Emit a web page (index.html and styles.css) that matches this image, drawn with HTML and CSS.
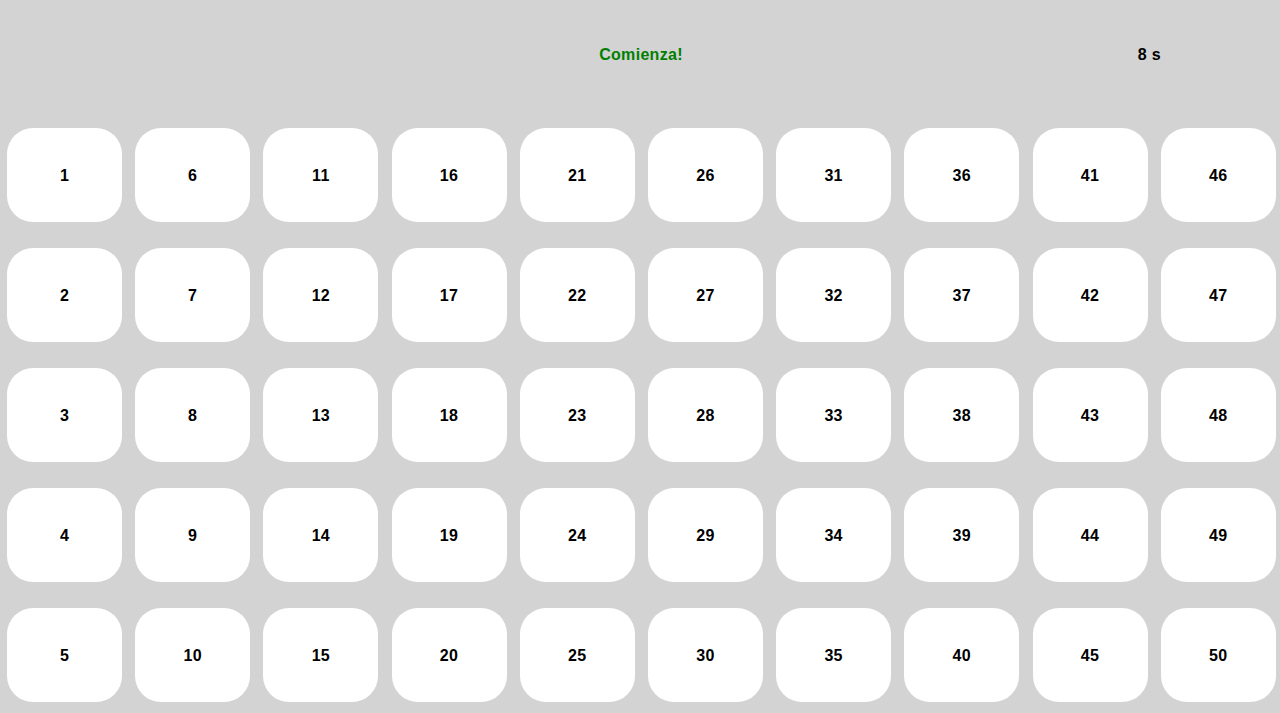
FILE: index.html
```html
<!DOCTYPE html>
<html>
<head>
<meta charset="utf-8">
<link rel="stylesheet" href="styles.css">
</head>
<body>
<header class="top">
  <div class="side"></div>
  <div class="status">Comienza!</div>
  <div class="side timer">8 s</div>
</header>
<main class="board">
  <div class="card">1</div><div class="card">6</div><div class="card">11</div><div class="card">16</div><div class="card">21</div><div class="card">26</div><div class="card">31</div><div class="card">36</div><div class="card">41</div><div class="card">46</div>
  <div class="card">2</div><div class="card">7</div><div class="card">12</div><div class="card">17</div><div class="card">22</div><div class="card">27</div><div class="card">32</div><div class="card">37</div><div class="card">42</div><div class="card">47</div>
  <div class="card">3</div><div class="card">8</div><div class="card">13</div><div class="card">18</div><div class="card">23</div><div class="card">28</div><div class="card">33</div><div class="card">38</div><div class="card">43</div><div class="card">48</div>
  <div class="card">4</div><div class="card">9</div><div class="card">14</div><div class="card">19</div><div class="card">24</div><div class="card">29</div><div class="card">34</div><div class="card">39</div><div class="card">44</div><div class="card">49</div>
  <div class="card">5</div><div class="card">10</div><div class="card">15</div><div class="card">20</div><div class="card">25</div><div class="card">30</div><div class="card">35</div><div class="card">40</div><div class="card">45</div><div class="card">50</div>
</main>
</body>
</html>
```
FILE: styles.css
```css
html, body {
  margin: 0;
  padding: 0;
  background: #d3d3d3;
  font-family: "Liberation Sans", Arial, sans-serif;
  font-weight: bold;
  font-size: 16px;
  letter-spacing: 0.3px;
  color: #000;
  overflow: hidden;
}
.top {
  box-sizing: border-box;
  height: 108px;
  padding-top: 2px;
  display: grid;
  grid-template-columns: 1fr auto 1fr;
  align-items: center;
}
.status {
  color: #008000;
  padding-left: 2px;
}
.timer {
  justify-self: end;
  padding-right: 119px;
}
.board {
  display: grid;
  grid-template-columns: repeat(10, 115px);
  grid-auto-rows: 94px;
  column-gap: 13.2px;
  row-gap: 26px;
  padding: 20px 0 0 7px;
}
.card {
  box-sizing: border-box;
  padding-top: 2px;
  background: #fff;
  border-radius: 26px;
  display: flex;
  align-items: center;
  justify-content: center;
}
```
